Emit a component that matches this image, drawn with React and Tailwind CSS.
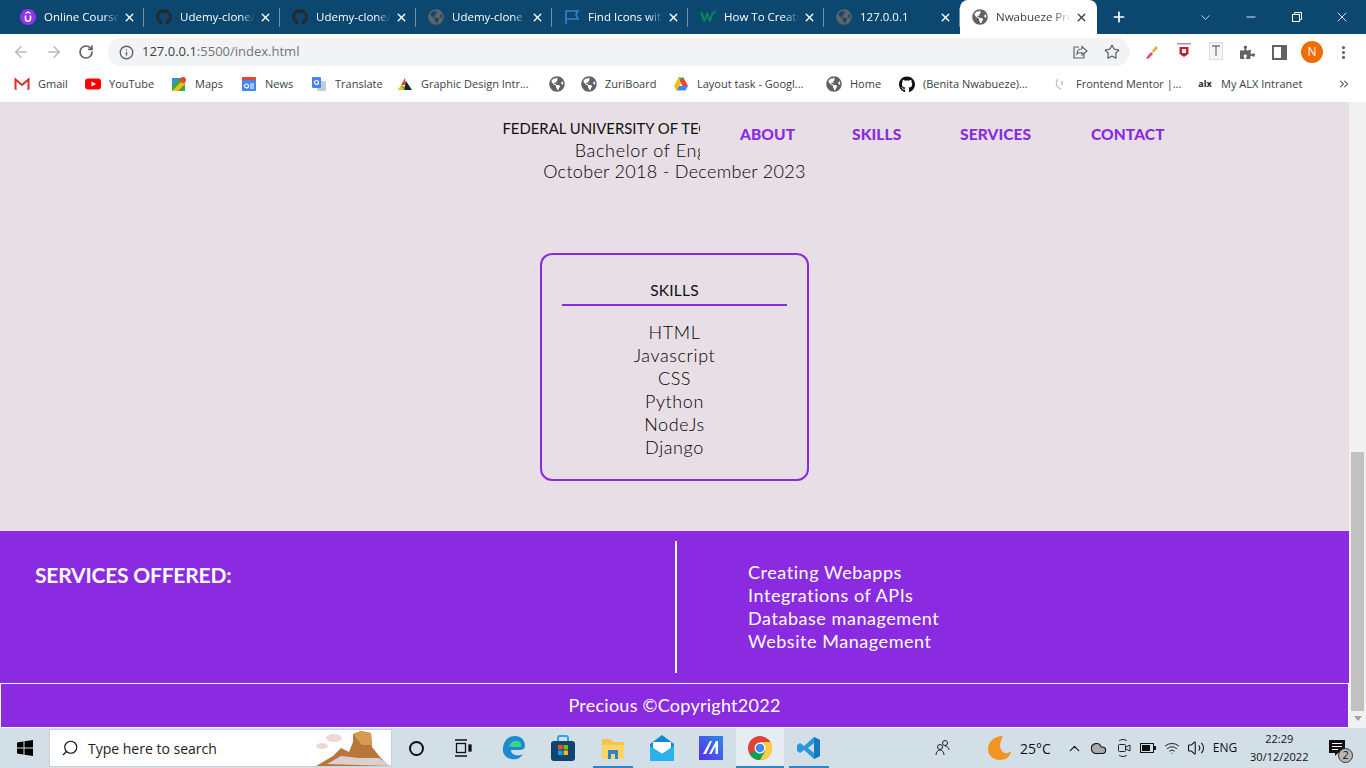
import React from "react";
import { ArrowLeft, ArrowRight, RotateCw, Info, Star, X, Plus, ChevronDown, Minus, MoreVertical, ChevronsRight, Search, ChevronUp, Volume2, Wifi, Cloud } from "lucide-react";
import { FaGithub, FaGlobeAmericas, FaPuzzlePiece } from "react-icons/fa";

const Globe = ({ c = "#5f6368", s = 16 }) => <FaGlobeAmericas size={s} color={c} />;
const Hub = ({ c = "#24292e" }) => <FaGithub size={16} color={c} />;

const UdemyIcon = () => (
  <svg width="16" height="16" viewBox="0 0 16 16"><circle cx="8" cy="8" r="8" fill="#9333ea" /><path d="M5.500 6.500v3.200a2.500 2.500 0 0 0 5 0V6.500" fill="none" stroke="#fff" strokeWidth="1.600" /><path d="M5.500 4.500L8 3l2.500 1.500" fill="none" stroke="#fff" strokeWidth="1.200" /></svg>
);
const FlagIcon = () => (
  <svg width="16" height="16" viewBox="0 0 16 16" fill="none" stroke="#3b7dd8" strokeWidth="1.600"><path d="M2 15V2h12l-2 3.500L14 10H3" /></svg>
);
const W3Icon = () => (
  <svg width="18" height="16" viewBox="0 0 18 16"><path d="M0 3h3l2 7 2-7h2l2 7 2-7h2.500L12 13H10L8 7l-2 6H4z" fill="#0a8a5c" /><rect x="15" y="1" width="2.500" height="3" fill="#0a8a5c" /></svg>
);

const tabs = [
  { icon: <UdemyIcon />, t: "Online Courses - Learn" },
  { icon: <Hub />, t: "Udemy-clone/index.html" },
  { icon: <Hub />, t: "Udemy-clone/index.html" },
  { icon: <Globe />, t: "Udemy-clone" },
  { icon: <FlagIcon />, t: "Find Icons with the" },
  { icon: <W3Icon />, t: "How To Create a" },
  { icon: <Globe />, t: "127.0.0.1" },
];

const Tab = ({ icon, t }) => (
  <div className="relative flex h-[34px] w-[136px] shrink-0 items-center pl-[12px] text-[11.5px] text-white">
    <span className="flex w-[16px] shrink-0 justify-center">{icon}</span>
    <span className="ml-[8px] w-[75px] overflow-hidden whitespace-nowrap [mask-image:linear-gradient(90deg,#000_80%,transparent)]">{t}</span>
    <X size={13} strokeWidth={2.500} className="ml-[4px] text-white" />
    <span className="absolute right-0 top-[8px] h-[19px] w-px bg-[#6d93ad]" />
  </div>
);

const TabBar = () => (
  <div className="flex h-[34px] shrink-0 items-center bg-[#0b476f] pl-[8px]">
    {tabs.map((x, i) => <Tab key={i} {...x} />)}
    <div className="flex h-[34px] w-[137px] items-center rounded-t-[8px] bg-white pl-[12px] text-[11.5px] text-[#3c4043]">
      <Globe />
      <span className="ml-[8px] w-[75px] overflow-hidden whitespace-nowrap [mask-image:linear-gradient(90deg,#000_75%,transparent)]">Nwabueze Precious</span>
      <X size={13} strokeWidth={2.500} className="ml-[4px] text-[#3c4043]" />
    </div>
    <Plus size={16} strokeWidth={2.500} className="ml-[14px] text-white" />
    <ChevronDown size={15} strokeWidth={1.250} className="ml-[71px] text-white" />
    <Minus size={14} strokeWidth={1.500} className="ml-[31px] text-white" />
    <svg width="12" height="12" viewBox="0 0 12 12" fill="none" stroke="#fff" className="ml-[33px]"><rect x="1.500" y="3.500" width="7" height="7" /><path d="M3.500 3.500v-2h7v7h-2" /></svg>
    <X size={16} strokeWidth={1.250} className="ml-[31px] text-white" />
  </div>
);

const Toolbar = () => (
  <div className="flex h-[34px] shrink-0 items-center bg-white pt-[2px]">
    <ArrowLeft size={18} className="ml-[12px] text-[#b7b9bc]" />
    <ArrowRight size={18} className="ml-[15px] text-[#b7b9bc]" />
    <RotateCw size={16} strokeWidth={2.500} className="ml-[15px] text-[#5f6368]" />
    <div className="ml-[14px] flex h-[28px] w-[1022px] items-center rounded-full bg-[#f1f3f4] pl-[11px] pr-[10px] text-[13px] text-[#3c4043]">
      <Info size={15} strokeWidth={2.200} className="text-[#5f6368]" />
      <span className="ml-[8px]">127.0.0.1<span className="text-[#70757a]">:5500/index.html</span></span>
      <svg width="16" height="16" viewBox="0 0 16 16" fill="none" stroke="#5f6368" strokeWidth="1.200" className="ml-auto"><path d="M7 3H2v11h10V9" /><path d="M5 10c0-3 2-5 5-5V2.500l5 4.500-5 4V8.500c-2 0-4 0-5 1.500z" /></svg>
      <Star size={16} strokeWidth={1.800} className="ml-[16px] text-[#5f6368]" />
    </div>
    <svg width="16" height="16" viewBox="0 0 16 16" className="ml-[14px]"><path d="M2 14l5-6 2 2-5 5z" fill="#e0457b" /><path d="M8 7l4-5 2 2-5 5z" fill="#f2a33a" /></svg>
    <svg width="14" height="18" viewBox="0 0 14 18" className="ml-[17px]"><rect y="0" width="14" height="1.500" fill="#999" /><path d="M2.500 4h9v7l-4.500 3-4.500-3z" fill="#c8202f" /><rect x="5" y="6" width="4" height="4" fill="#fff" /></svg>
    <svg width="16" height="20" viewBox="0 0 16 20" className="ml-[18px]"><rect x=".5" y=".5" width="13" height="17" fill="#f5f5f5" stroke="#ddd" /><path d="M3 4h8M7 4v10" stroke="#777" strokeWidth="1.300" fill="none" /></svg>
    <FaPuzzlePiece size={15} color="#5f6368" className="ml-[15px]" />
    <svg width="15" height="15" viewBox="0 0 15 15" className="ml-[17px]"><rect x="1" y="1" width="13" height="13" fill="none" stroke="#5f6368" strokeWidth="2" /><rect x="9" y="1" width="5" height="13" fill="#5f6368" /></svg>
    <span className="ml-[14px] flex h-[22px] w-[22px] items-center justify-center rounded-full bg-[#ef6c00] text-[12px] text-white">N</span>
    <MoreVertical size={17} strokeWidth={2.500} className="ml-[12px] text-[#5f6368]" />
  </div>
);

const Gmail = () => (
  <svg width="16" height="16" viewBox="0 0 16 16" fill="none"><path d="M1.500 13.500V3.500L8 9l6.500-5.500v10" stroke="#d93025" strokeWidth="2" /><path d="M1 13.500h2M13 13.500h2" stroke="#888" /></svg>
);
const YouTube = () => (
  <svg width="16" height="16" viewBox="0 0 16 16"><rect y="2.500" width="16" height="11" rx="3" fill="#f00" /><path d="M6.500 5.500v5L11 8z" fill="#fff" /></svg>
);
const Maps = () => (
  <svg width="16" height="16" viewBox="0 0 16 16"><rect x="1" y="2" width="13" height="13" fill="#34a853" /><path d="M1 15L14 2v6l-7 7z" fill="#fbbc04" /><path d="M1 2h7L1 9z" fill="#4285f4" /><circle cx="12" cy="4" r="3" fill="#ea4335" /></svg>
);
const News = () => (
  <svg width="16" height="16" viewBox="0 0 16 16"><rect x="1" y="1" width="14" height="5" rx="1" fill="#ea4335" /><rect x="1" y="4" width="14" height="11" rx="1" fill="#4285f4" /><path d="M9 8h4M9 10h4M9 12h4" stroke="#fff" /><circle cx="5.500" cy="10" r="2" fill="none" stroke="#fff" strokeWidth="1.200" /></svg>
);
const Translate = () => (
  <svg width="16" height="16" viewBox="0 0 16 16"><rect x="6" y="5" width="9" height="10" rx="1" fill="#c3cdd8" /><rect x="1" y="1" width="9" height="11" rx="1" fill="#4285f4" /><circle cx="5.500" cy="6.500" r="2" fill="none" stroke="#fff" strokeWidth="1.200" /></svg>
);
const GraphicD = () => (
  <svg width="16" height="16" viewBox="0 0 16 16"><path d="M8 2L4 9h5z" fill="#ea4335" /><path d="M4 9l-3 5h6z" fill="#fbbc04" /><path d="M9 5l-2 9h8z" fill="#222" /><path d="M4 9l3 5 1-3z" fill="#34a853" /></svg>
);
const Drive = () => (
  <svg width="16" height="16" viewBox="0 0 16 16"><path d="M5.500 1.500h5L8 7z" fill="#34a853" /><path d="M5.500 1.500L1 10l2.500 4.500L8 7z" fill="#fbbc04" /><path d="M10.500 1.500L15 10H9.500L7 5z" fill="#ea4335" /><path d="M3.500 14.500L6 10h9l-2.500 4.500z" fill="#4285f4" /></svg>
);
const FM = () => (
  <svg width="16" height="16" viewBox="0 0 16 16" fill="none"><path d="M6 3a6 6 0 0 0 3 10" stroke="#b9c4d8" strokeWidth="1.200" /><path d="M10 5v4" stroke="#7f9bc9" /></svg>
);

const Bm = ({ w, icon, children }) => (
  <div className={`flex h-[32px] shrink-0 items-center gap-[8px] ${w}`}>
    <span className="flex w-[16px] shrink-0 justify-center">{icon}</span>
    <span className="whitespace-nowrap">{children}</span>
  </div>
);

const Bookmarks = () => (
  <div className="flex h-[34px] shrink-0 items-center bg-white pb-[2px] pl-[14px] text-[11px] text-[#3c4043]">
    <Bm w="w-[71px]" icon={<Gmail />}>Gmail</Bm>
    <Bm w="w-[86px]" icon={<YouTube />}>YouTube</Bm>
    <Bm w="w-[70px]" icon={<Maps />}>Maps</Bm>
    <Bm w="w-[70px]" icon={<News />}>News</Bm>
    <Bm w="w-[86px]" icon={<Translate />}>Translate</Bm>
    <Bm w="w-[152px]" icon={<GraphicD />}>Graphic Design Intr...</Bm>
    <Bm w="w-[32px]" icon={<Globe />} />
    <Bm w="w-[92px]" icon={<Globe />}>ZuriBoard</Bm>
    <Bm w="w-[153px]" icon={<Drive />}>Layout task - Googl...</Bm>
    <Bm w="w-[73px]" icon={<Globe />}>Home</Bm>
    <Bm w="w-[153px]" icon={<FaGithub size={17} color="#111" />}>(Benita Nwabueze)...</Bm>
    <Bm w="w-[145px]" icon={<FM />}>Frontend Mentor |...</Bm>
    <Bm w="w-[140px]" icon={<span className="text-[9px] font-bold text-[#222]">alx</span>}>My ALX Intranet</Bm>
    <ChevronsRight size={14} className="text-[#5f6368]" />
  </div>
);

const skills = ["HTML", "Javascript", "CSS", "Python", "NodeJs", "Django"];
const services = ["Creating Webapps", "Integrations of APIs", "Database management", "Website Management"];

const Page = () => (
  <div className="relative flex min-h-0 flex-1 bg-[#e8dee6] font-['Lato',sans-serif]">
    <main className="flex w-[1349px] shrink-0 flex-col">
      <section className="flex flex-col items-center pt-[16px] text-[18px] font-light leading-[21.5px] tracking-[0.3px] text-black">
        <h2 className="whitespace-nowrap text-[14.9px] font-normal tracking-normal text-[#111]">FEDERAL UNIVERSITY OF TECHNOLOGY, OWERRI</h2>
        <p className="tracking-[0.65px]">Bachelor of Engineering</p>
        <p>October 2018 - December 2023</p>
      </section>
      <section className="mx-auto mt-[70px] flex h-[228px] w-[269px] flex-col items-center rounded-[12px] border-2 border-[#8a2be2] px-[20px] pt-[24px]">
        <h3 className="w-full border-b-2 border-[#8a2be2] pb-[3px] text-center text-[15.5px] font-normal leading-[22px] tracking-[0.2px] text-[#111]">SKILLS</h3>
        <ul className="mt-[15px] text-center text-[18px] font-light leading-[23px] tracking-[0.6px] text-black">
          {skills.map((s) => <li key={s}>{s}</li>)}
        </ul>
      </section>
      <section className="mt-[50px] flex h-[152px] items-stretch bg-[#8a2be2] text-white">
        <div className="w-[675px] pl-[35px] pt-[31px] text-[21px] font-bold leading-[26px] tracking-[-0.2px]">SERVICES OFFERED:</div>
        <div className="my-[10px] w-[2px] bg-white" />
        <ul className="pl-[71px] pt-[30px] text-[18px] font-normal leading-[23px] tracking-[0.55px]">
          {services.map((s) => <li key={s}>{s}</li>)}
        </ul>
      </section>
      <footer className="flex h-[45px] items-center justify-center border border-white bg-[#8a2be2] text-[18px] font-normal tracking-[0.25px] text-white">Precious ©Copyright2022</footer>
    </main>
    <nav className="absolute left-[700px] top-0 flex h-[59px] w-[500px] items-center bg-[#e8dee6] pl-[40px] pt-[6px] text-[15.5px] font-black tracking-[0.1px] text-[#8a2be2]">
      <a className="w-[112px]">ABOUT</a>
      <a className="w-[108px]">SKILLS</a>
      <a className="w-[131px]">SERVICES</a>
      <a>CONTACT</a>
    </nav>
    <div className="flex w-[17px] shrink-0 flex-col items-center bg-[#f1f1f1]">
      <div className="mt-[350px] h-[259px] w-[13px] bg-[#c1c1c1]" />
      <div className="mt-[5px] h-0 w-0 border-x-[4px] border-t-[5px] border-x-transparent border-t-[#a3a3a3]" />
    </div>
  </div>
);

const WinLogo = () => (
  <svg width="16" height="16" viewBox="0 0 16 16" fill="#000"><path d="M0 2.500l6.500-1v6H0zM7.500 1.300L16 0v7.500H7.500zM0 8.500h6.500v6l-6.500-1zM7.500 8.500H16V16l-8.500-1.300z" /></svg>
);
const Slot = ({ w, active, under, children }) => (
  <div className={`relative flex h-[40px] shrink-0 items-center justify-center ${w} ${active ? "bg-[#e6edf2]" : ""}`}>
    {children}
    {under && <span className="absolute bottom-0 left-0 right-0 h-[2px] bg-[#2a86c8]" />}
  </div>
);
const Sphinx = () => (
  <svg width="76" height="38" viewBox="0 0 76 38" className="absolute bottom-0 right-0"><ellipse cx="19" cy="10" rx="8" ry="4" fill="#f1d5d5" /><ellipse cx="7" cy="18" rx="6" ry="3" fill="#f1d5d5" /><path d="M1 38L18 28l8-8 8 4 4-10 0-8 8-3 10 2 1 14 8 10 10 10z" fill="#b8763a" /><path d="M38 6l8-3 10 2 1 12-10 0z" fill="#d89a4e" /><path d="M12 36l14-8 18 2 20 0 12 8z" fill="#dccfd0" /></svg>
);

const Taskbar = () => (
  <div className="flex h-[40px] shrink-0 items-center bg-[#d3dfe7] font-['Open_Sans',sans-serif] text-[#111]">
    <Slot w="w-[49px]"><WinLogo /></Slot>
    <div className="relative flex h-[38px] w-[343px] shrink-0 items-center border border-[#c9d0d6] bg-white pl-[11px] text-[14px] text-[#222]">
      <Search size={18} strokeWidth={1.500} className="-scale-x-100 text-[#111]" />
      <span className="ml-[9px]">Type here to search</span>
      <Sphinx />
    </div>
    <Slot w="w-[49px]"><span className="h-[15px] w-[15px] rounded-full border-[2.500px] border-[#111]" /></Slot>
    <Slot w="w-[43px]"><svg width="18" height="18" viewBox="0 0 18 18" fill="none" stroke="#111" strokeWidth="1.300"><path d="M1 1h12M1 17h12" /><rect x="2.500" y="4.500" width="9" height="9" /><rect x="15" y="6" width="2" height="6" fill="#111" /></svg></Slot>
    <Slot w="w-[60px]"><svg width="24" height="26" viewBox="0 0 24 26"><path d="M1 13C2 5 7 1 13 1c6 0 10 4 10 10 0 3-3 4-6 4H9c0 5 7 7 12 4-3 5-8 6-12 5C4 23 0 19 1 13z" fill="#1a8bd0" /><path d="M7 11c2-5 6-6 9-5 3 1 4 3 3 6H10z" fill="#3fd08a" /></svg></Slot>
    <Slot w="w-[38px]"><svg width="24" height="26" viewBox="0 0 24 26"><path d="M7 7V3a2 2 0 0 1 2-2h6a2 2 0 0 1 2 2v4" fill="none" stroke="#28a8e0" strokeWidth="2" /><rect x="0" y="6" width="24" height="20" rx="3" fill="#10436f" /><rect x="7" y="10" width="4.500" height="4.500" fill="#f25022" /><rect x="12.500" y="10" width="4.500" height="4.500" fill="#7fba00" /><rect x="7" y="15.500" width="4.500" height="4.500" fill="#00a4ef" /><rect x="12.500" y="15.500" width="4.500" height="4.500" fill="#ffb900" /></svg></Slot>
    <div className="w-[11px] shrink-0" />
    <Slot w="w-[40px]" under><svg width="24" height="24" viewBox="0 0 24 24"><path d="M1 3h9l2 3h11v17H1z" fill="#f3c34c" /><rect x="1" y="9" width="22" height="14" fill="#fbd667" /><path d="M7 14h10v9h-3v-5h-4v5H7z" fill="#2a86c8" /></svg></Slot>
    <Slot w="w-[58px]"><svg width="24" height="26" viewBox="0 0 24 26"><path d="M12 0l12 9v17H0V9z" fill="#0f8bd6" /><path d="M3 7h18v6l-9 6-9-6z" fill="#fff" /><path d="M0 11l12 8 12-8v15H0z" fill="#2bb1ee" /></svg></Slot>
    <Slot w="w-[40px]"><svg width="24" height="24" viewBox="0 0 24 24"><defs><linearGradient id="ma" x1="0" y1="1" x2="1" y2="0"><stop offset="0" stopColor="#5b2bf0" /><stop offset="1" stopColor="#2a8ce8" /></linearGradient></defs><rect width="24" height="24" fill="url(#ma)" /><path d="M4 18L11 5h2L7 18zM10 18l7-13h2v13h-2.500v-8L12.500 18z" fill="#fff" /></svg></Slot>
    <div className="w-[5px] shrink-0" />
    <Slot w="w-[48px]" active under><svg width="24" height="24" viewBox="0 0 24 24"><circle cx="12" cy="12" r="12" fill="#db4437" /><path d="M12 12L1.600 18A12 12 0 0 0 12 24l5.500-6z" fill="#0f9d58" /><path d="M12 6h10.600A12 12 0 0 1 12 24l5.200-9z" fill="#ffcd40" /><path d="M1.600 6L7 15l5-9z" fill="#db4437" /><circle cx="12" cy="12" r="5.500" fill="#fff" /><circle cx="12" cy="12" r="4.300" fill="#4285f4" /></svg></Slot>
    <div className="w-[5px] shrink-0" />
    <Slot w="w-[40px]" under><svg width="24" height="24" viewBox="0 0 24 24"><path d="M17 1l6 3v16l-6 3-10-9-4 3-3-2V9l3-2 4 3z" fill="#2a97dc" /><path d="M17 7l-6 5 6 5z" fill="#d3dfe7" /><path d="M17 1l6 3v16l-6 3z" fill="#1878c0" /></svg></Slot>
    <svg width="18" height="18" viewBox="0 0 18 18" fill="none" stroke="#222" className="ml-[105px]"><circle cx="11" cy="4" r="2.500" /><circle cx="6" cy="8" r="2.500" /><path d="M2 16c0-3 2-5 4-5s4 2 4 5M11 7c2 0 4 2 4 4" /></svg>
    <svg width="24" height="26" viewBox="0 0 24 26" className="ml-[36px]"><path d="M15 1C6 1 0 7 0 14s6 11 12 11 11-4 11-9c-3 3-7 3-9 0-3-4-2-9 1-15z" fill="#f29423" /></svg>
    <span className="ml-[8px] text-[14px]">25°C</span>
    <ChevronUp size={17} strokeWidth={1.700} className="ml-[15px]" />
    <Cloud size={17} fill="#aaa" strokeWidth={1.500} className="ml-[7px]" />
    <svg width="14" height="20" viewBox="0 0 14 20" fill="none" stroke="#222" className="ml-[10px]"><path d="M2 3c2-2 6-2 8 0M2 17c2 2 6 2 8 0" /><rect x="1.500" y="6.500" width="7" height="7" rx="1" /><path d="M9 9l4-2v6l-4-2" /></svg>
    <svg width="16" height="10" viewBox="0 0 16 10" className="ml-[9px]"><rect x=".5" y=".5" width="13" height="9" fill="none" stroke="#111" /><rect x="2" y="2" width="8" height="6" fill="#111" /><rect x="14" y="3" width="2" height="4" fill="#111" /></svg>
    <Wifi size={16} strokeWidth={1.400} className="ml-[8px]" />
    <Volume2 size={18} strokeWidth={1.400} className="ml-[7px]" />
    <span className="ml-[8px] text-[12px]">ENG</span>
    <div className="ml-[12px] flex w-[60px] flex-col items-center text-[11px] leading-[18px]">
      <span>22:29</span>
      <span>30/12/2022</span>
    </div>
    <div className="relative ml-[20px]">
      <svg width="16" height="16" viewBox="0 0 16 16"><path d="M0 0h16v13H9l-3 3v-3H0z" fill="#111" /><path d="M3 3.500h10M3 6.500h10M3 9.500h6" stroke="#fff" /></svg>
      <span className="absolute -bottom-[7px] -right-[8px] flex h-[15px] w-[15px] items-center justify-center rounded-full border border-[#333] bg-[#b8b8b8] text-[11px]">2</span>
    </div>
  </div>
);

export default function App() {
  return (
    <div className="flex h-[768px] w-[1366px] flex-col overflow-hidden bg-white font-['Open_Sans',sans-serif]">
      <TabBar />
      <Toolbar />
      <Bookmarks />
      <Page />
      <Taskbar />
    </div>
  );
}
